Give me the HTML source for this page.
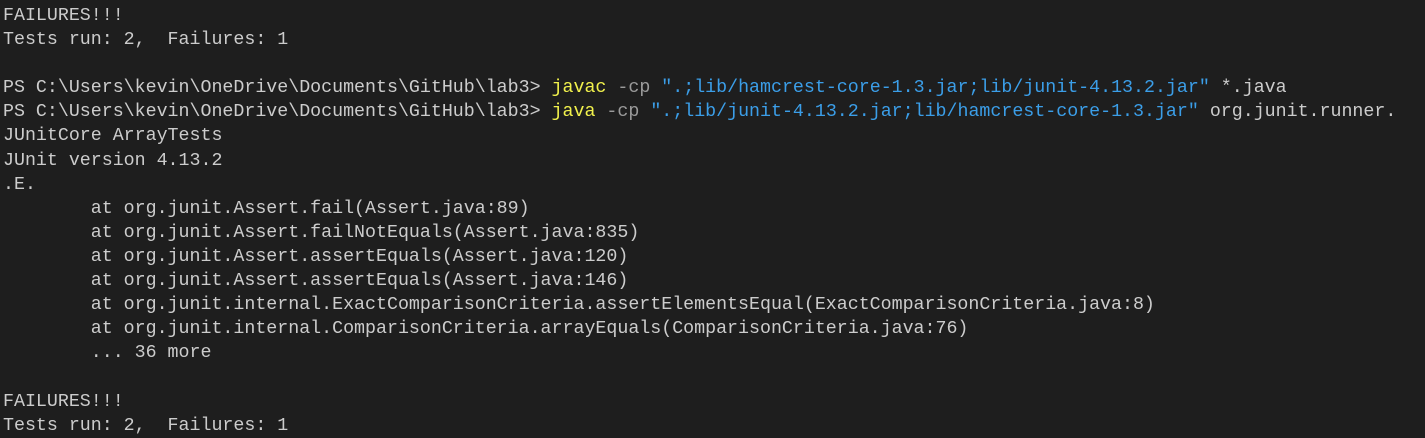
<!DOCTYPE html>
<html><head><meta charset="utf-8"><style>
html,body{margin:0;padding:0;background:#1e1e1e;width:1425px;height:438px;overflow:hidden}
pre{margin:0;padding:4px 0 0 3px;font-family:"Liberation Mono",monospace;font-size:18.3px;line-height:24.1px;color:#cccccc;white-space:pre}
.y{color:#f1f14c}.g{color:#9a9a9a}.b{color:#3b9ee8}
</style></head><body><pre>FAILURES!!!
Tests run: 2,  Failures: 1

PS C:\Users\kevin\OneDrive\Documents\GitHub\lab3&gt; <span class="y">javac</span> <span class="g">-cp</span> <span class="b">".;lib/hamcrest-core-1.3.jar;lib/junit-4.13.2.jar"</span> *.java
PS C:\Users\kevin\OneDrive\Documents\GitHub\lab3&gt; <span class="y">java</span> <span class="g">-cp</span> <span class="b">".;lib/junit-4.13.2.jar;lib/hamcrest-core-1.3.jar"</span> org.junit.runner.
JUnitCore ArrayTests
JUnit version 4.13.2
.E.
        at org.junit.Assert.fail(Assert.java:89)
        at org.junit.Assert.failNotEquals(Assert.java:835)
        at org.junit.Assert.assertEquals(Assert.java:120)
        at org.junit.Assert.assertEquals(Assert.java:146)
        at org.junit.internal.ExactComparisonCriteria.assertElementsEqual(ExactComparisonCriteria.java:8)
        at org.junit.internal.ComparisonCriteria.arrayEquals(ComparisonCriteria.java:76)
        ... 36 more

FAILURES!!!
Tests run: 2,  Failures: 1</pre></body></html>
